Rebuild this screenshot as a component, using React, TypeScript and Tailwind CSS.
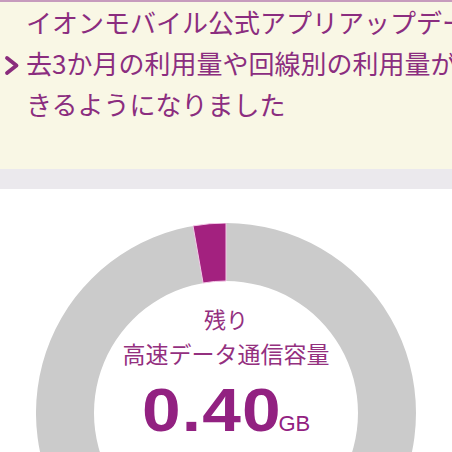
import React from "react";

function Donut() {
  const cx = 190, cy = 190, rO = 190, rI = 132;
  const a0 = (-10 * Math.PI) / 180;
  const p = (r: number, a: number) => [cx + r * Math.sin(a), cy - r * Math.cos(a)];
  const [ox0, oy0] = p(rO, a0);
  const [ix0, iy0] = p(rI, a0);
  const seg = `M ${ox0} ${oy0} A ${rO} ${rO} 0 0 1 ${cx} ${cy - rO} L ${cx} ${cy - rI} A ${rI} ${rI} 0 0 0 ${ix0} ${iy0} Z`;
  return (
    <svg className="absolute inset-0" width="380" height="380" viewBox="0 0 380 380">
      <path
        d={`M ${cx} ${cy - rO} A ${rO} ${rO} 0 1 1 ${cx - 0.01} ${cy - rO} L ${cx - 0.01} ${cy - rI} A ${rI} ${rI} 0 1 0 ${cx} ${cy - rI} Z`}
        fill="#cbcbcb"
      />
      <path d={seg} fill="#a3217f" stroke="#f4c8e8" strokeWidth="1" />
    </svg>
  );
}

export default function App() {
  const jp = { fontFamily: '"Noto Sans CJK JP", "Noto Sans", sans-serif' };
  return (
    <div className="w-[452px] h-[452px] overflow-hidden bg-white" style={jp}>
      <div className="h-[169px] bg-[#f9f7e5] border-t-2 border-[#c79bbd] flex items-start">
        <div className="w-[26px] shrink-0 h-[126px] flex items-center pl-[4px]">
          <svg width="16" height="21" viewBox="0 0 16 21">
            <path d="M3 3 L12.5 10.5 L3 18" fill="none" stroke="#8a2c7d" strokeWidth="3.8" strokeLinecap="round" strokeLinejoin="round" />
          </svg>
        </div>
        <div className="flex-1 overflow-hidden text-[26px] leading-[41px] text-[#8b2d7f] whitespace-nowrap mt-[-1px]">
          <div>イオンモバイル公式アプリアップデート</div>
          <div>去3か月の利用量や回線別の利用量が</div>
          <div>きるようになりました</div>
        </div>
      </div>
      <div className="h-[20px] bg-[#ebe9ed]" />
      <div className="pt-[34px] flex justify-center">
        <div className="relative w-[380px] h-[380px]">
          <Donut />
          <div className="relative flex flex-col items-center pt-[78px] text-[#94307f]">
            <div className="text-[22px] leading-[34px]">残り</div>
            <div className="text-[23px] leading-[36px]">高速データ通信容量</div>
            <div className="flex items-baseline mt-[8px] text-[#922181]" style={{ fontFamily: '"Liberation Sans", Arial, sans-serif' }}>
              <span className="inline-block origin-left scale-x-[1.12] text-[62px] leading-[62px] font-bold tracking-[1px] mr-[12px]">0.40</span>
              <span className="text-[22px] leading-[22px]">GB</span>
            </div>
          </div>
        </div>
      </div>
    </div>
  );
}
